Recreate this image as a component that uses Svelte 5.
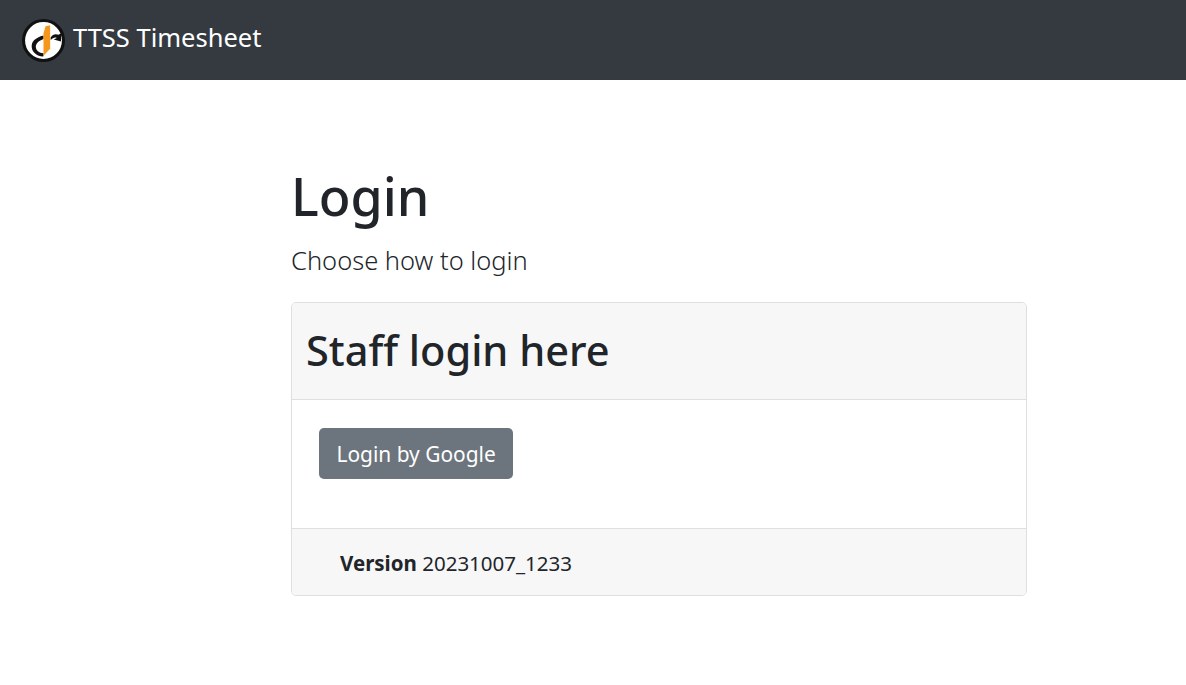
<script lang="ts">
  let version = '20231007_1233';
</script>

<nav class="navbar">
  <a class="brand" href="#top">
    <svg class="logo" viewBox="0 0 42 42" aria-hidden="true">
      <circle cx="21" cy="21" r="19.5" fill="#fff" stroke="#111" stroke-width="3" />
      <path d="M21 16C13 18 9 22 9.500 27.500C10 33 16 37 21 36.500L21 33.500C16.500 33 13.500 30.500 13.500 27C13.500 24 16.500 21 21 19.500Z" fill="#111" />
      <path d="M23 7L27.500 6L27.500 29L21 36L21 14Z" fill="#f6971d" />
      <path d="M28 18C30 15 33 14 35.500 15.500L38.500 14L38 22L31 20L34 18.500C32 17.500 30 18.500 28 20.500Z" fill="#111" />
    </svg>
    <span class="brand-text">TTSS Timesheet</span>
  </a>
</nav>

<main class="container">
  <h1>Login</h1>
  <p class="lead">Choose how to login</p>
  <section class="card">
    <header class="card-header"><h2>Staff login here</h2></header>
    <div class="card-body">
      <button type="button" class="btn">Login by Google</button>
    </div>
    <footer class="card-footer"><strong>Version</strong> {version}</footer>
  </section>
</main>

<style>
  :global(body) {
    margin: 0;
    background: #fff;
    color: #212529;
    font-family: "Noto Sans", "Open Sans", sans-serif;
    font-size: 20.5px;
  }
  .navbar {
    display: flex;
    align-items: center;
    height: 80px;
    padding-left: 22px;
    background: #343a40;
  }
  .brand {
    display: flex;
    align-items: center;
    gap: 8px;
    color: #fff;
    font-size: 25.5px;
    text-decoration: none;
  }
  .brand-text {
    margin-bottom: 6px;
  }
  .logo {
    width: 43px;
    height: 43px;
  }
  .container {
    width: 736px;
    margin: 0 0 0 291px;
    padding-top: 83px;
  }
  h1 {
    margin: 0 0 12px;
    font-size: 52px;
    font-weight: 500;
    line-height: 66px;
  }
  .lead {
    margin: 0 0 23px;
    font-size: 25.5px;
    font-weight: 300;
    line-height: 38px;
  }
  .card {
    border: 1px solid #dfdfdf;
    border-radius: 5px;
    overflow: hidden;
  }
  .card-header {
    padding: 22px 14px 23px;
    background: #f7f7f7;
    border-bottom: 1px solid #dfdfdf;
  }
  h2 {
    margin: 0;
    font-size: 41.5px;
    font-weight: 500;
    line-height: 51px;
  }
  .card-body {
    padding: 28px 27px 49px;
  }
  .btn {
    display: block;
    height: 51px;
    padding: 0 17.5px;
    border: 0;
    border-radius: 5px;
    background: #6c757d;
    color: #fff;
    font: inherit;
    font-size: 20.9px;
  }
  .card-footer {
    padding: 19px 48px 17px;
    background: #f7f7f7;
    border-top: 1px solid #dfdfdf;
    line-height: 30px;
  }
  strong {
    font-weight: 700;
  }
</style>
